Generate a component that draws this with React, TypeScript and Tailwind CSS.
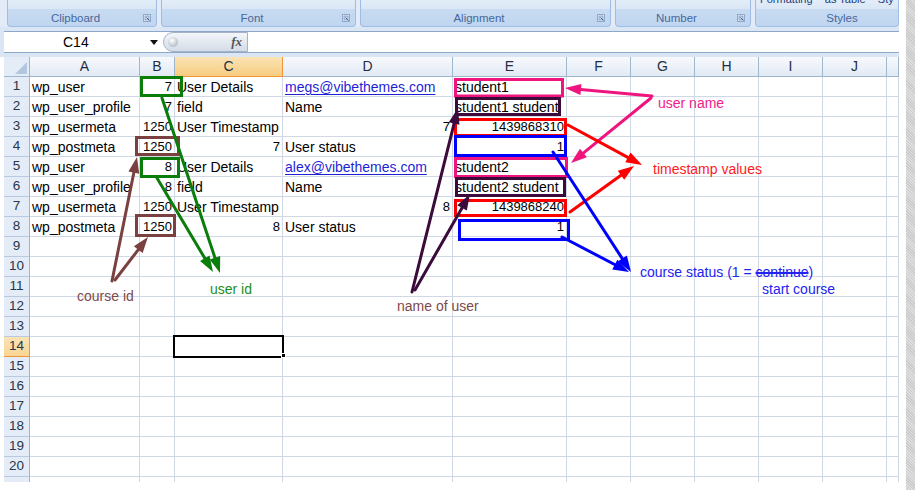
import React from 'react';

type C = { t: string; r?: boolean; link?: boolean };
const s = (t: string): C => ({ t });
const n = (t: string): C => ({ t, r: true });
const l = (t: string): C => ({ t, link: true });

const DATA: C[][] = [
  [s('wp_user'), n('7'), s('User Details'), l('megs@vibethemes.com'), s('student1')],
  [s('wp_user_profile'), n('7'), s('field'), s('Name'), s('student1 student')],
  [s('wp_usermeta'), n('1250'), s('User Timestamp'), n('7'), n('1439868310')],
  [s('wp_postmeta'), n('1250'), n('7'), s('User status'), n('1')],
  [s('wp_user'), n('8'), s('User Details'), l('alex@vibethemes.com'), s('student2')],
  [s('wp_user_profile'), n('8'), s('field'), s('Name'), s('student2 student')],
  [s('wp_usermeta'), n('1250'), s('User Timestamp'), n('8'), n('1439868240')],
  [s('wp_postmeta'), n('1250'), n('8'), s('User status'), n('1')],
];

const COLS = ['A', 'B', 'C', 'D', 'E', 'F', 'G', 'H', 'I', 'J', ''];

function Launcher() {
  return (
    <svg width="8" height="8" viewBox="0 0 8 8" className="shrink-0">
      <rect x="0.5" y="0.5" width="7" height="7" fill="#eef3fa" stroke="#8fa9cc" />
      <rect x="2" y="2" width="4" height="4" fill="#c9d8ec" stroke="#7d97bd" strokeWidth="0.8" />
      <path d="M3.5 3.5 L6.5 6.5" stroke="#3e5f8f" strokeWidth="1" />
    </svg>
  );
}

function Group({ w, label, launcher = true, pl = 0, top }: { w: string; label: string; launcher?: boolean; pl?: number; top?: React.ReactNode }) {
  return (
    <div className={`${w} h-[27px] flex flex-col rounded-b-[4px] border border-t-0 border-[#9fbde4] bg-[linear-gradient(to_bottom,#e3edf8_0%,#dbe7f6_33%,#c7dbf2_36%,#c0d5ef_100%)]`}>
      <div className="h-[10px] overflow-hidden">{top}</div>
      <div className="h-[16px] flex items-center">
        <div className="flex-1 text-center text-[11.5px] leading-[16px] text-[#46689c]" style={pl ? { paddingLeft: pl } : undefined}>
          {label}
        </div>
        {launcher ? <div className="mr-[5px] flex items-center"><Launcher /></div> : null}
      </div>
    </div>
  );
}

function Arrow({ x1, y1, x2, y2, c, len = 16, w = 5.5 }: { x1: number; y1: number; x2: number; y2: number; c: string; len?: number; w?: number }) {
  const dx = x2 - x1;
  const dy = y2 - y1;
  const L = Math.hypot(dx, dy);
  const ux = dx / L;
  const uy = dy / L;
  const bx = x2 - ux * len;
  const by = y2 - uy * len;
  const px = -uy * w;
  const py = ux * w;
  return (
    <g>
      <line x1={x1} y1={y1} x2={bx + ux * 3} y2={by + uy * 3} stroke={c} strokeWidth={3} strokeLinecap="round" />
      <polygon points={`${x2},${y2} ${bx + px},${by + py} ${bx - px},${by - py}`} fill={c} />
    </g>
  );
}

export default function App() {
  const rows = Array.from({ length: 21 }, (_, i) => i + 1);
  return (
    <div className="relative w-[915px] h-[490px] overflow-hidden flex bg-white font-['Liberation_Sans',Arial,sans-serif]">
      <div className="w-[899px] h-full flex flex-col bg-white">
        {/* Ribbon */}
        <div className="h-[27px] flex pl-[7px] gap-[4px] bg-[#e2ebf7]">
          <Group w="w-[150px]" label="Clipboard" />
          <Group w="w-[195px]" label="Font" />
          <Group w="w-[251px]" label="Alignment" />
          <Group w="w-[136px]" label="Number" />
          <Group
            w="w-[144px]"
            label="Styles"
            launcher={false}
            pl={30}
            top={
              <div className="-mt-[7px] pl-[4px] whitespace-nowrap text-[11px] leading-[13px] text-[#21417d]">
                Formatting&nbsp;&nbsp;&nbsp;&nbsp;as Table&nbsp;&nbsp;&nbsp;&nbsp;Sty
              </div>
            }
          />
        </div>
        <div className="h-[4px] bg-[#dbe6f4]" />
        {/* Formula bar */}
        <div className="h-[22px] flex bg-[#dbe6f4] pl-[4px]">
          <div className="flex-1 flex border-y border-[#8ea7c8] bg-white">
            <div className="w-[159px] flex items-center">
              <span className="ml-[59px] text-[14px] leading-[18px] text-black">C14</span>
              <svg width="8" height="5" viewBox="0 0 8 5" className="ml-auto mr-[5px]">
                <polygon points="0,0 8,0 4,5" fill="#111" />
              </svg>
            </div>
            <div className="w-[85px] flex items-center rounded-l-[11px] border border-[#a3b4ca] bg-[linear-gradient(to_bottom,#f4f6fa_0%,#e3e9f1_50%,#d4dce7_100%)]">
              <div className="ml-[4px] w-[10px] h-[10px] rounded-full bg-[radial-gradient(circle_at_40%_35%,#ffffff_0%,#c8ced6_55%,#9aa3ae_100%)]" />
              <span className="ml-auto mr-[5px] italic font-bold text-[13px] leading-[16px] text-[#555] font-['Liberation_Serif',serif]">fx</span>
            </div>
            <div className="flex-1 bg-white" />
          </div>
        </div>
        <div className="h-[4px] bg-[#dbe6f4]" />
        {/* Grid */}
        <div className="pl-[4px] h-[425px] overflow-hidden">
          <div className="grid grid-cols-[26px_110px_35px_108px_170px_114px_64px_64px_64px_64px_64px_12px] auto-rows-[20px] bg-white">
            <div className="border-r border-b border-[#9eb6ce] bg-[#e4ecf7] flex items-end justify-end pr-[2px] pb-[2px]">
              <svg width="12" height="12" viewBox="0 0 12 12">
                <polygon points="12,0 12,12 0,12" fill="#b3c6df" />
              </svg>
            </div>
            {COLS.map((c, i) => (
              <div
                key={'h' + i}
                className={
                  c === 'C'
                    ? 'border-r border-b border-[#f29536] bg-[linear-gradient(to_bottom,#fbe3b5_0%,#f9d89b_50%,#f7cc80_100%)] flex items-center justify-center text-[14px] text-[#1e2f45]'
                    : 'border-r border-b border-[#9eb6ce] bg-[linear-gradient(to_bottom,#f7f9fc_0%,#edf2f9_50%,#e1e9f4_100%)] flex items-center justify-center text-[14px] text-[#1e2f45]'
                }
              >
                {c}
              </div>
            ))}
            {rows.map((r) => {
              const data = DATA[r - 1];
              return (
                <React.Fragment key={'r' + r}>
                  <div
                    className={
                      r === 14
                        ? 'border-r border-b border-[#f29536] bg-[linear-gradient(to_bottom,#fbe3b5_0%,#f8d593_100%)] flex items-center justify-center text-[13.5px] text-[#27364a]'
                        : 'border-r border-b border-r-[#9eb6ce] border-b-[#b9cae0] bg-[#e4ecf7] flex items-center justify-center text-[13.5px] text-[#27364a]'
                    }
                  >
                    {r <= 20 ? r : null}
                  </div>
                  {COLS.map((_, ci) => {
                    const cell = data ? data[ci] : undefined;
                    let cls = 'border-r border-b border-[#d0d7e5] overflow-hidden whitespace-nowrap px-[2px] pt-[1px] leading-[18px] text-black';
                    if (cell?.r) cls += ' text-right text-[13px]';
                    else cls += ' text-[14px]';
                    return (
                      <div key={'c' + r + '-' + ci} className={cls}>
                        {cell ? (
                          cell.link ? (
                            <span className="text-[#1f1fd6] underline underline-offset-[2px]">{cell.t}</span>
                          ) : (
                            cell.t
                          )
                        ) : null}
                      </div>
                    );
                  })}
                </React.Fragment>
              );
            })}
          </div>
        </div>
        <div className="flex-1 bg-white" />
      </div>
      <div className="w-[7px] h-full bg-white" />
      <div className="w-[9px] h-full bg-[repeating-linear-gradient(45deg,#dedede_0px,#dedede_1px,#cbcbcb_1px,#cbcbcb_2px)]" />

      {/* Active cell C14 */}
      <div className="absolute left-[173px] top-[335px] w-[111px] h-[23px] border-2 border-black pointer-events-none" />
      <div className="absolute left-[281px] top-[353px] w-[5px] h-[5px] bg-black border border-white pointer-events-none" />

      {/* Annotations */}
      <svg className="absolute left-0 top-0 pointer-events-none" width="915" height="490" viewBox="0 0 915 490">
        <g fill="none" strokeWidth="3">
          <rect x="455.5" y="79.5" width="107" height="16.5" stroke="#f0157e" />
          <rect x="456.5" y="98.5" width="103" height="16" stroke="#3b0b3b" />
          <rect x="455.5" y="158.5" width="111" height="18" stroke="#f0157e" />
          <rect x="456.5" y="178.5" width="108" height="17" stroke="#3b0b3b" />
          <rect x="455.5" y="119.5" width="110" height="16" stroke="#ff0000" />
          <rect x="455.5" y="200.5" width="110" height="15" stroke="#ff0000" />
          <rect x="455.5" y="136.5" width="110" height="19" stroke="#0000ff" />
          <rect x="459.5" y="220.5" width="109" height="19" stroke="#0000ff" />
          <rect x="141.5" y="77.5" width="40" height="18" stroke="#0a7d0a" />
          <rect x="141.5" y="158.5" width="37" height="18" stroke="#0a7d0a" />
          <rect x="136.5" y="137.5" width="42" height="17" stroke="#7b4141" />
          <rect x="136.5" y="215.5" width="38" height="20" stroke="#7b4141" />
        </g>
        <Arrow x1={652} y1={96} x2={565} y2={88} c="#f0157e" />
        <Arrow x1={651} y1={98} x2={571} y2={163} c="#f0157e" />
        <Arrow x1={412} y1={292} x2={458} y2={108} c="#3b0b3b" />
        <Arrow x1={415} y1={290} x2={470} y2={194} c="#3b0b3b" />
        <Arrow x1={568} y1={125} x2={642} y2={165} c="#ff0000" />
        <Arrow x1={570} y1={212} x2={634} y2={166} c="#ff0000" />
        <Arrow x1={553} y1={152} x2={631} y2={272} c="#0000ff" />
        <Arrow x1={562} y1={237} x2={629} y2={272} c="#0000ff" />
        <Arrow x1={162} y1={98} x2={220} y2={273} c="#0a7d0a" />
        <Arrow x1={157} y1={178} x2={213} y2={272} c="#0a7d0a" />
        <Arrow x1={112} y1={281} x2={137} y2={157} c="#7b4141" />
        <Arrow x1={115} y1={280} x2={148} y2={237} c="#7b4141" />
      </svg>
      <span className="absolute left-[658px] top-[94px] text-[14px] leading-[18px] whitespace-nowrap text-[#f0208a]">user name</span>
      <span className="absolute left-[653px] top-[160px] text-[14px] leading-[18px] whitespace-nowrap text-[#ff1a1a]">timestamp values</span>
      <span className="absolute left-[640px] top-[263px] text-[14px] leading-[18px] whitespace-nowrap text-[#2323f0]">
        course status (1 = <span className="line-through decoration-2">continue</span>)
      </span>
      <span className="absolute left-[762px] top-[280px] text-[14px] leading-[18px] whitespace-nowrap text-[#2323f0]">start course</span>
      <span className="absolute left-[210px] top-[280px] text-[14px] leading-[18px] whitespace-nowrap text-[#1a901a]">user id</span>
      <span className="absolute left-[77px] top-[287px] text-[14px] leading-[18px] whitespace-nowrap text-[#7d4a4a]">course id</span>
      <span className="absolute left-[397px] top-[297px] text-[14px] leading-[18px] whitespace-nowrap text-[#7d4a4a]">name of user</span>
    </div>
  );
}
